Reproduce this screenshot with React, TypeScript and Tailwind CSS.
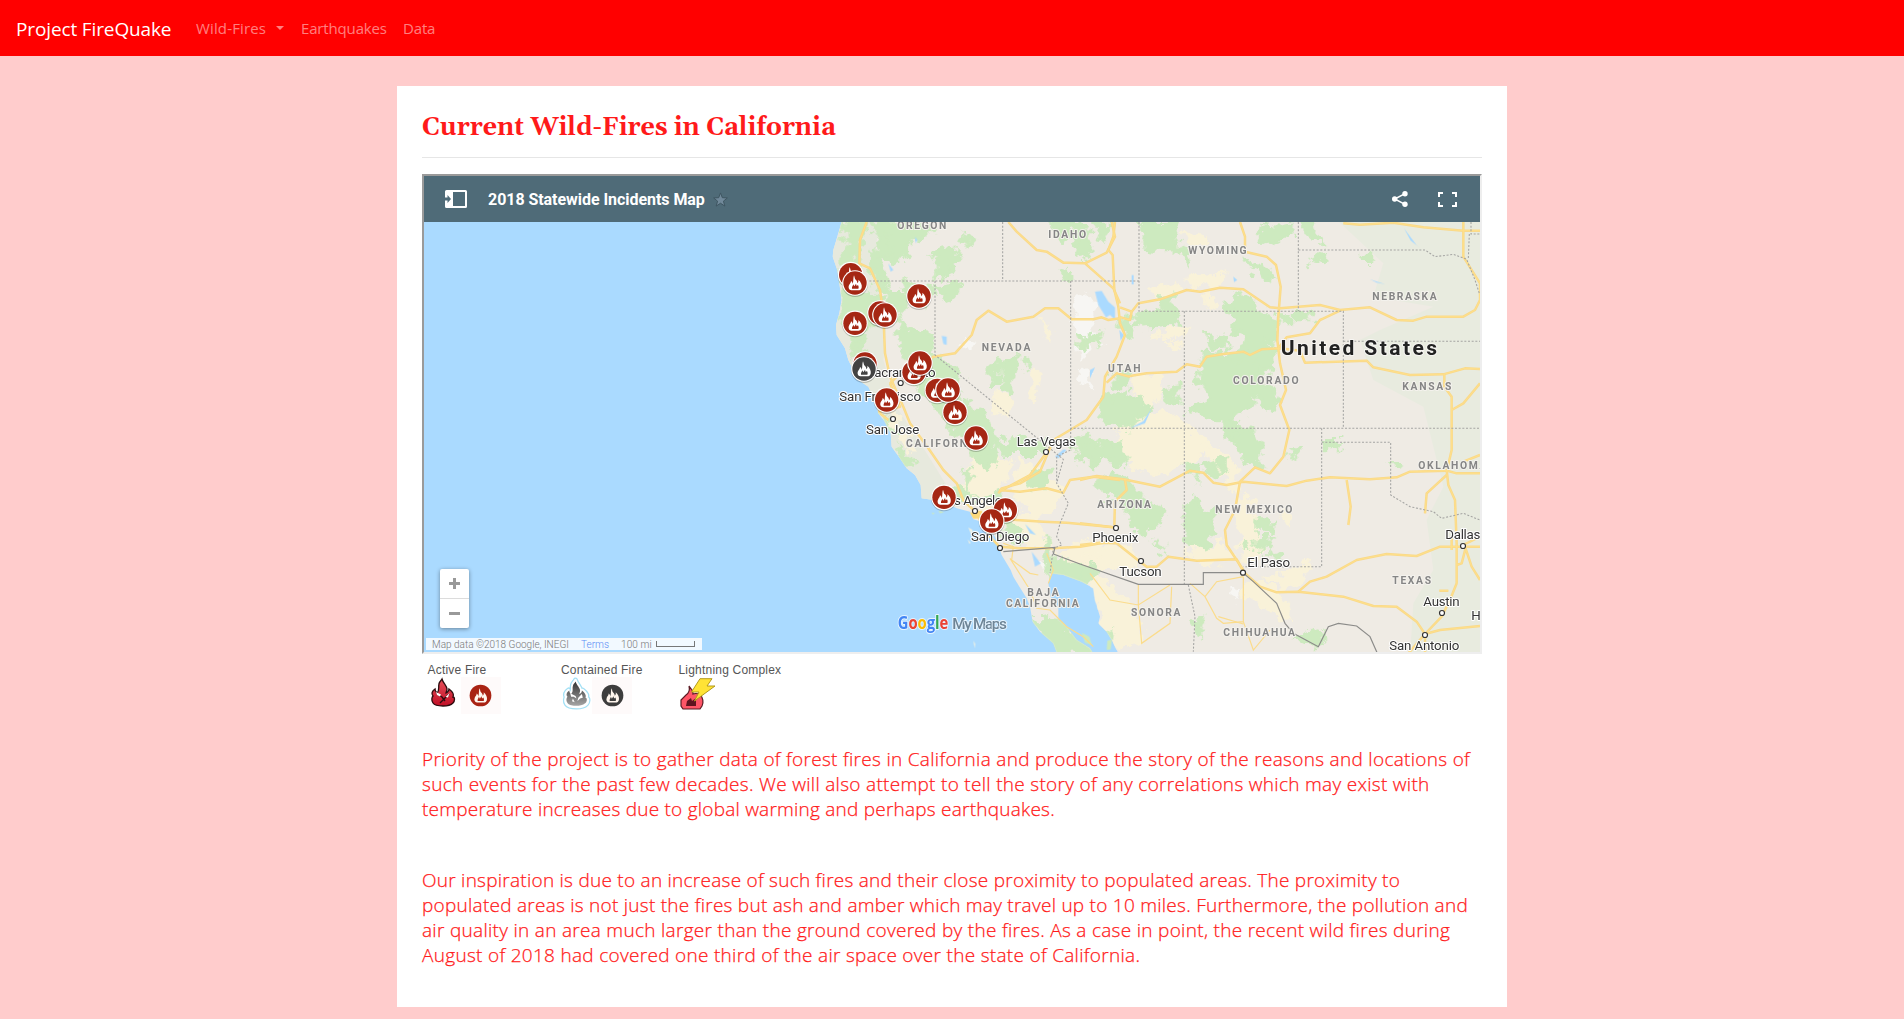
import type { ReactNode } from "react";

/* Map geometry uses a 3x grid: one screen pixel is three map units. */

const LAND =
  "M130 -10L115 40 100 90 98 110 112 150 118 190 125 240 118 280 108 315 110 345 135 385 145 420 160 450 175 480 205 500 225 540 235 580 255 605 272 640 275 680 300 715 320 745 345 765 362 795 365 835 400 840 440 850 470 865 510 875 520 898 545 905 565 922 585 950 598 985 605 1005 632 1050 640 1070 655 1095 680 1135 690 1160 698 1205 720 1235 760 1270 775 1310 885 1310 870 1285 830 1260 800 1220 775 1200 775 1160 752 1130 745 1090 755 1060 790 1065 845 1085 880 1105 885 1140 900 1190 895 1210 920 1235 935 1260 955 1300 2060 1310V-10Z";

const EAST_PLAINS =
  "M1600 -10H2060V1310H1830L1840 1150 1900 1050 1880 900 1930 800 1870 560 1720 480 1680 360 1740 330 1900 260 1720 230 1750 130Z";

const GREENS = [
  "M135 6L200 6 190 60 168 90 175 140 150 150 122 180 120 120 140 60Z",
  "M215 6L290 6 280 60 255 100 240 150 270 215 235 195 215 130 235 60Z",
  "M290 50L330 70 320 100 290 90ZM400 100L470 90 450 140 470 150 405 180 410 130ZM490 40L520 60 500 80ZM408 200L480 190 470 225 430 240Z",
  "M265 215L320 215 310 190 400 205 380 260 320 250 300 300 265 290ZM122 205L200 215 230 260 200 330 160 350 140 310 115 300Z",
  "M270 20L350 10 400 30 390 50 330 60 300 120 260 110ZM200 215L250 230 240 300 215 320 210 260ZM160 345L190 350 200 400 160 400Z",
  "M290 310L345 335 400 345 385 410 320 410ZM370 400L430 415 480 475 490 540 560 595 595 680 560 730 500 665 440 605 380 530 325 465 320 410Z",
  "M570 440L600 425 590 490 575 490ZM610 420L655 410 650 470 620 525 605 490ZM680 410L690 430 680 460Z",
  "M745 5L860 20 870 60 860 110 820 115 830 70 760 30ZM785 150L815 155 815 180 785 180ZM830 350L900 340 895 368 845 378ZM905 545L960 520 960 600 910 590ZM880 10L925 10 910 60Z",
  "M820 660L860 640 900 670 960 660 960 725 850 725ZM170 360L210 400 190 420 160 400Z",
  "M520 690L590 720 560 740 525 715ZM490 750L520 770 500 810ZM680 770L740 755 745 800 700 800ZM440 800L500 810 530 845 470 830ZM610 890L680 950 660 970 610 950ZM745 950L735 1000 745 1080 760 1040Z",
  "M600 670L640 660 740 660 720 700 620 700ZM785 1015L885 1050 845 1090 755 1060 745 1040ZM295 685L340 720 330 740 300 710Z",
  "M250 590L275 610 290 640 270 640ZM60 380L60 380M470 600L520 640 500 660ZM540 830L600 820 590 850Z",
  "M700 1205L770 1198 830 1260 880 1298 780 1300Z",
];
const GREENS_EAST = [
  "M180 10L290 6 275 60 330 100 320 135 290 90 200 85ZM545 20L630 10 630 50 570 75 545 60ZM660 6L700 6 725 60 690 50Z",
  "M165 290L210 275 290 270 290 315 200 320 165 305ZM430 260L480 225 515 230 530 270 590 290 575 365 500 380 470 420 500 350 450 330 480 290Z",
  "M370 400L450 405 540 420 550 480 600 550 560 570 510 510 510 560 450 600 380 590 330 570 390 540 360 480Z",
  "M60 540L120 520 180 540 210 570 150 620 70 610ZM100 470L150 460 140 500 100 500ZM650 275h35v30h-35zM605 285h30v20h-30zM690 120L730 100 735 115 700 130ZM500 120L570 150 570 180 530 160ZM380 350L440 345 440 380 390 385ZM845 112h26v12h-22z",
  "M500 370L580 380 585 420 555 460 530 420 470 420ZM430 600L500 620 530 660 480 680 440 650ZM250 510L300 500 290 550 250 545ZM240 240L280 230 285 262 245 262ZM130 300L160 310 150 350 132 345Z",
  "M0 680L60 670 130 680 130 730 60 720 0 725ZM50 790L100 760 140 780 190 840 250 880 240 910 190 940 160 930 130 860 120 830 60 820Z",
  "M315 860L350 845 370 865 400 880 410 935 370 980 320 975ZM320 730L350 730 350 780ZM460 650L520 630 540 670 540 740 490 730 490 700ZM370 740L430 720 430 760 390 770ZM530 900h45v30h-45zM530 950h40v40h-40zM490 965h18v20h-18zM580 990L600 1020 590 1030Z",
  "M730 665h55v18h-55zM935 728h28v20h-28zM640 1250L720 1230 730 1265 700 1280ZM340 1200L370 1190 360 1240ZM220 975L240 960 250 995ZM0 1040L50 1050 10 1090 0 1090ZM630 690l25 0-20 20z",
  "M0 1235L30 1260 40 1290 15 1280ZM82 1232L96 1240 90 1265 76 1258Z",
];
const SANDS = [
  "M530 710L640 720 590 810 600 860 700 900 760 980 690 980 640 930 560 870 480 810 500 760ZM660 720L780 790 770 860 700 900 640 820Z",
  "M590 520L640 540 620 590 590 570ZM700 450L715 470 700 560 690 500ZM730 310L760 330 750 360ZM260 560L300 600 340 700 290 640ZM770 1000L860 960 960 990 1000 1040 880 1040Z",
];
const SANDS_EAST = [
  "M160 470L240 460 240 520 200 570 170 540ZM180 590L300 580 330 630 460 730 470 810 430 770 380 690 310 730 240 770 190 750 130 720 110 640ZM310 40L380 60 350 75 310 60ZM330 170L430 165 400 200 330 190ZM220 210L300 190 300 215 230 235ZM230 340L320 320 310 345 240 360ZM260 370L300 365 290 385ZM370 235L400 235 390 270Z",
  "M330 985L430 975 470 1020 380 1030 330 1020ZM480 830L520 840 540 1020 500 1030 480 970ZM20 1000L150 980 180 1030 100 1030ZM40 1065L110 1110 170 1170 180 1260 120 1290 90 1230 50 1160 40 1100ZM490 1070L600 1110 640 1190 600 1200 530 1140 490 1130ZM690 1030L650 1100 560 1080ZM600 870L640 890 620 920Z",
];
const SALT = "M820 225L870 220 880 260 870 320 910 370 860 380 820 350ZM500 350L525 360 510 390 490 380ZM830 450L860 440 880 500 850 490ZM700 1010L740 1030 735 1060Z";
const SALT_EAST = "M0 290L40 300 40 340 20 400 0 420ZM450 1100L480 1110 470 1145ZM360 880L380 875 370 895Z";
const WATER = "M885 215L905 213 925 245 945 262 945 300 930 285 918 292 895 255ZM425 348L440 350 440 375 430 372ZM675 912L708 945 690 940ZM695 995L722 1030 705 1040ZM265 130L280 150 272 155ZM345 50L352 60 347 70ZM765 710L790 688 800 690 775 715Z";
const WATER_EAST = "M118 330L132 345 122 362ZM30 450L45 442 30 475ZM155 165h6v28h-6zM460 170L472 180 462 186ZM972 25L1010 75 1022 85 992 62ZM870 178L915 192 890 188ZM150 625L190 603 215 565 195 610Z";

const ROADS = [
  "M200 6L180 60 178 130 210 145 240 210 250 280 255 400 270 470 310 560 330 610 385 685 430 750 470 790 490 840 525 875 570 950 598 980",
  "M625 6L650 35 710 90 740 95 790 128 855 130 920 98 945 50 935 6M855 130L940 205 960 250",
  "M270 490L310 450 380 430 400 410 465 400 515 345 530 300 565 272 620 305 700 290 735 265 775 265 815 298 880 298 905 292 925 300 960 295",
  "M235 575L300 560 270 490M240 580L265 600M598 810L660 815 740 805 790 818 810 780 880 770 960 780M598 815L690 765 738 700",
  "M525 873L600 895 650 900 730 905 800 908 940 922M600 980L660 985 760 985 840 980 960 960",
];
const ROADS_EAST = [
  "M105 6L100 50 85 90 98 105 103 210 115 260 120 310 135 345 110 410 75 470 70 530 20 600 -30 630 -80 660 -120 755 -180 790 -235 805 -245 820",
  "M120 262L155 275 175 250 240 238 320 210 360 215 420 203 490 208 570 262 600 265 720 255 780 270 870 262 950 300 1000 302 1040 290 1150 290 1185 270 1200 240 1200 190 1150 110 1150 6M115 290L150 300 155 275",
  "M480 6L495 50 495 95 560 110 588 135 602 200 595 290 592 360 600 430 618 510 600 555 628 630 610 710 570 760 525 742 480 785",
  "M780 272L720 300 690 340 620 352 595 385M150 468L200 460 290 455 320 433 360 440 380 410 430 402 490 395 510 405 545 388 600 385 660 392 675 428 860 422 880 442 990 465 1090 463 1155 445 1200 447M80 488L110 460 150 470",
  "M1093 463V500L1115 530 1115 690 1100 755M1115 570L1150 550 1200 490M790 10L840 14 940 8 1030 22 1150 32H1200",
  "M0 780L50 768 130 778 240 800 330 752 370 758 400 788 440 795 490 785 620 798 680 782 750 772 870 778 950 772 990 755 1100 752 1130 760 1200 760M1150 725L1200 705",
  "M135 780L140 810 105 845 103 915M0 975L60 968 110 970 180 1025 200 1040 230 1040 265 1010 350 1022 470 1018 490 1055 540 1100 590 1117 655 1115 790 1130 880 1158 950 1160 1010 1205 1035 1242 1080 1230 1200 1218M0 910L100 922",
  "M480 785L465 870 435 930 440 975 490 1050M655 1115L690 1085 740 1070 830 1020 920 1002 1010 1008 1080 980 1200 980",
  "M1100 750L1105 795 1125 840 1130 970 1130 1090 1110 1140 1085 1190 1035 1242 985 1300M1100 765L1040 820 1035 880M800 780L812 860 805 915M1158 980L1145 1030 1130 1035M1155 980L1175 1040 1200 1080M1115 950V990M1035 1242L1035 1300M1078 1112H1105M1150 975L1200 950",
];
const MINOR_EAST = "M-230 970L-200 980 -205 1020 -150 1060 -125 1065M-210 1015L-150 1110 -130 1165 -90 1170 -40 1220 10 1250 40 1280M-100 1000L-80 1050 -95 1090M30 1060L90 1140 175 1155 270 1095M175 1095L175 1155 185 1270 270 1210 275 1100M330 1090L375 1130 410 1195 430 1210 490 1205V1070M375 1130L410 1085 490 1070M490 1205L520 1290 570 1230M415 1190L490 1212";

const BORDERS =
  "M120 183H1017M608 6V183M405 183V405L790 718 770 790M812 183V625H2040M812 625V690L790 700 770 712V790L805 850 780 910 770 950 785 975 760 985 750 1060";
const BORDERS_EAST =
  "M177 6V274H790V625M655 6V274M655 90H1035L1065 110 1120 103 1160 118 1185 180 1198 220M313 274V1093M790 364H1200M1173 6V42H1200M1168 42L1165 115M725 625V1040H490M725 667H932V825L990 860 1060 875 1085 895 1150 880 1200 900M325 1095L345 1190 340 1295";
const NATIONAL = "M610 995L765 982 760 1002 840 1032 1015 1093H1210V1058H1328L1360 1085 1430 1150 1455 1210 1480 1240 1555 1280 1585 1220 1615 1210 1670 1218 1710 1250 1732 1300";

type Label = [text: string, x: number, y: number, width: number];

const STATES: Label[] = [
  ["OREGON", 292, 26, 147],
  ["IDAHO", 745, 55, 113],
  ["NEVADA", 545, 392, 146],
  ["CALIFORNIA", 318, 681, 224],
  ["UTAH", 924, 456, 98],
  ["WYOMING", 1165, 101, 175],
  ["NEBRASKA", 1717, 239, 193],
  ["COLORADO", 1299, 491, 197],
  ["KANSAS", 1807, 509, 147],
  ["ARIZONA", 892, 863, 161],
  ["NEW MEXICO", 1246, 880, 231],
  ["OKLAHOMA", 1855, 746, 204],
  ["TEXAS", 1777, 1091, 116],
  ["SONORA", 993, 1187, 148],
  ["CHIHUAHUA", 1270, 1249, 215],
  ["BAJA", 682, 1127, 94],
  ["CALIFORNIA", 618, 1160, 218],
];

const CITIES: Label[] = [
  ["Sacramento", 200, 472, 207],
  ["San Francisco", 118, 542, 245],
  ["San Jose", 198, 642, 160],
  ["Las Vegas", 650, 678, 178],
  ["Los Angeles", 420, 856, 205],
  ["San Diego", 513, 963, 175],
  ["Phoenix", 877, 967, 138],
  ["Tucson", 958, 1067, 127],
  ["El Paso", 1342, 1042, 128],
  ["Dallas", 1936, 957, 105],
  ["Austin", 1870, 1159, 109],
  ["San Antonio", 1768, 1291, 210],
  ["Houston", 2014, 1200, 140],
];

const DOTS = [
  [302, 489], [279, 597], [738, 696], [525, 873], [600, 984], [948, 924],
  [1023, 1023], [1329, 1058], [1989, 978], [1926, 1179], [1875, 1245],
];

const FIRES: [number, number, boolean?][] = [
  [152, 164], [165, 189], [357, 228], [240, 279], [255, 285], [165, 310],
  [195, 432], [192, 447, true], [342, 457], [360, 429], [465, 577],
  [412, 511], [444, 510], [260, 540], [528, 654], [616, 870], [432, 832], [575, 903],
];

const FLAME =
  "M-3 -23C0 -17 -2 -13 3 -9C6 -6 7 -3 7 1C10 -2 11 -6 10 -10C18 -3 22 6 20 14C19 19 15 22 10 22H-11C-18 21 -21 14 -18 7C-16 2 -12 0 -12 -6C-9 -4 -7 -1 -7 3C-4 -5 -6 -15 -3 -23Z";
const EMBER = "M-9 17C-10 11 -6 9 -5 4L-2 10 3 2 5 9 9 6C12 11 11 15 10 17Z";

function Halo({ items, className, size, stroke }: { items: Label[]; className: string; size: number; stroke: string }) {
  return (
    <g className={className} fontSize={size} stroke={stroke} strokeWidth={6} strokeLinejoin="round" paintOrder="stroke">
      {items.map(([t, x, y, w]) => (
        <text key={t + x} x={x} y={y} textLength={w}>
          {t}
        </text>
      ))}
    </g>
  );
}

function Shapes({ list }: { list: string[] }) {
  return (
    <>
      {list.map((d) => (
        <path key={d} d={d} />
      ))}
    </>
  );
}

function MapCanvas() {
  return (
    <svg className="block h-[430px] w-[1056px]" viewBox="-1128 6 3168 1290" fill="none">
      <defs>
        <filter id="rough" x="-5%" y="-5%" width="110%" height="110%">
          <feTurbulence type="fractalNoise" baseFrequency="0.03" numOctaves="4" seed="4" />
          <feDisplacementMap in="SourceGraphic" scale="60" xChannelSelector="R" yChannelSelector="G" />
        </filter>
        <clipPath id="land">
          <path d={LAND} />
        </clipPath>
      </defs>
      <path d="M-1128 0H2060V1310H-1128Z" fill="#aadaff" />
      <path d={LAND} fill="#efebe4" />
      <g clipPath="url(#land)">
        <path d="M90 0H240L220 130 260 300 250 420 290 560 380 700 480 860 300 860 60 400Z" fill="#e7e9dd" />
        <path d={EAST_PLAINS} fill="#e8ebdf" />
        <g filter="url(#rough)">
          <g fill="#f9f2d9" stroke="#f9f2d9" strokeWidth={8}>
            <Shapes list={SANDS} />
            <g transform="translate(840 0)">
              <Shapes list={SANDS_EAST} />
            </g>
          </g>
          <g fill="#f7f6f3">
            <path d={SALT} />
            <path d={SALT_EAST} transform="translate(840 0)" />
          </g>
          <g fill="#cdeabf" stroke="#cdeabf" strokeWidth={10}>
            <Shapes list={GREENS} />
            <g transform="translate(840 0)">
              <Shapes list={GREENS_EAST} />
            </g>
          </g>
        </g>
        <g fill="#aadaff">
          <path d={WATER} />
          <path d={WATER_EAST} transform="translate(840 0)" />
        </g>
      </g>
      <g fill="#cdeabf">
        <path d="M845 1238L868 1250 875 1275 855 1268ZM922 1262L936 1258 932 1288 920 1290ZM395 877L405 880 398 883ZM415 872L432 876 420 880Z" />
        <path d="M520 1262L526 1272 524 1285ZM505 922L518 930 514 945ZM503 958L512 968 508 972Z" fill="#eef0e4" />
      </g>
      <path d={MINOR_EAST} transform="translate(840 0)" stroke="#fbdc8c" strokeWidth={3.5} />
      <g stroke="#f9d98a" strokeWidth={7.5} strokeLinejoin="round">
        <Shapes list={ROADS} />
        <g transform="translate(840 0)">
          <Shapes list={ROADS_EAST} />
        </g>
      </g>
      <g stroke="#ffe08a" strokeWidth={3} strokeLinejoin="round">
        <Shapes list={ROADS} />
        <g transform="translate(840 0)">
          <Shapes list={ROADS_EAST} />
        </g>
      </g>
      <path d="M510 878L545 872 545 895 520 896Z" fill="#fbd97c" />
      <g stroke="#a5a5a3" strokeWidth={3.2} strokeDasharray="6 5">
        <path d={BORDERS} />
        <path d={BORDERS_EAST} transform="translate(840 0)" />
      </g>
      <path d={NATIONAL} stroke="#8c8c8a" strokeWidth={3.5} />

      <Halo items={STATES} className="fill-[#858585] font-['Roboto',sans-serif] font-bold" size={31} stroke="#f4f2ed" />
      <Halo
        items={[["United States", 1442, 405, 469]]}
        className="fill-[#222222] font-['Roboto',sans-serif] font-bold"
        size={63}
        stroke="#f7f5f2"
      />
      <Halo items={CITIES} className="fill-[#333333] font-['Roboto',sans-serif]" size={40} stroke="#ffffff" />
      {DOTS.map(([x, y]) => (
        <circle key={x} cx={x} cy={y} r={7.5} fill="#fff" stroke="#333" strokeWidth={3.5} />
      ))}

      {FIRES.map(([x, y, contained]) => (
        <g key={`${x}-${y}`} transform={`translate(${x} ${y})`}>
          <circle cy={3} r={39} fill="#000" opacity={0.22} />
          <circle r={38.5} fill="#fff" />
          <circle r={35} fill={contained ? "#424242" : "#a52714"} />
          <path d={FLAME} fill="#fff" />
          <path d={EMBER} fill={contained ? "#424242" : "#a52714"} />
        </g>
      ))}

      <g
        className="font-['Open_Sans',sans-serif] font-bold"
        fontSize={52}
        stroke="#e6f4ff"
        strokeWidth={6}
        strokeLinejoin="round"
        paintOrder="stroke"
      >
        <text x={293} y={1226} textLength={152} lengthAdjust="spacingAndGlyphs">
          <tspan fill="#4285f4">G</tspan>
          <tspan fill="#ea4335">o</tspan>
          <tspan fill="#fbbc05">o</tspan>
          <tspan fill="#4285f4">g</tspan>
          <tspan fill="#34a853">l</tspan>
          <tspan fill="#ea4335">e</tspan>
        </text>
        <text className="font-['Roboto',sans-serif] font-medium" x={457} y={1226} fontSize={46} textLength={164} fill="#6d8496">
          My Maps
        </text>
      </g>
    </svg>
  );
}

function MapHeader() {
  return (
    <div className="flex h-[46px] items-center bg-[#4f6b78] pr-[23px] pl-[21px]">
      <svg className="h-[18px] w-[22px]" viewBox="0 0 22 18">
        <path
          fillRule="evenodd"
          fill="#fff"
          d="M1.5 0h19A1.5 1.5 0 0 1 22 1.5v15a1.5 1.5 0 0 1-1.5 1.5h-19A1.5 1.5 0 0 1 0 16.500v-6h2.500v2.500L6 9 2.500 5v2.500H0v-6A1.500 1.500 0 0 1 1.500 0ZM8 2v14h12V2Z"
        />
      </svg>
      <span className="ml-[21px] pt-[2px] font-['Roboto',sans-serif] text-[16px] leading-[20px] font-bold tracking-[-0.050px] text-white">
        2018 Statewide Incidents Map
      </span>
      <svg className="ml-[8px] size-[15px]" viewBox="0 0 24 24">
        <path
          d="M12 1.500l2.900 7.600 8.100.400-6.300 5.100 2.200 7.900-6.900-4.500-6.900 4.500 2.200-7.900L1 9.500l8.100-.400z"
          fill="#71899a"
          stroke="#3f5661"
          strokeWidth={1.6}
        />
      </svg>
      <svg className="ml-auto h-[16px] w-[16px]" viewBox="0 0 16 16">
        <path d="M13 2.700L2.700 8 13 13.300" stroke="#fff" strokeWidth={1.5} fill="none" />
        <circle cx={13} cy={2.7} r={2.7} fill="#fff" />
        <circle cx={2.7} cy={8} r={2.7} fill="#fff" />
        <circle cx={13} cy={13.3} r={2.7} fill="#fff" />
      </svg>
      <svg className="ml-[30px] h-[15px] w-[19px]" viewBox="0 0 19 15" fill="none" stroke="#fff" strokeWidth={2}>
        <path d="M1 5V1H5M14 1H18V5M18 10V14H14M5 14H1V10" />
      </svg>
    </div>
  );
}

function IncidentMap() {
  return (
    <div className="relative h-[480px] overflow-hidden border-2 border-t-[#9a9a9a] border-r-[#eeeeee] border-b-[#eeeeee] border-l-[#9a9a9a]">
      <MapHeader />
      <MapCanvas />
      <div className="absolute top-[393px] left-[16px] flex h-[59px] w-[29px] flex-col rounded-[2px] bg-white shadow-[0_1px_4px_rgba(0,0,0,0.4)]">
        <button className="flex flex-1 items-center justify-center border-b border-[#dcdcdc]">
          <svg className="size-[11px]" viewBox="0 0 11 11">
            <path d="M4 0h3v4h4v3H7v4H4V7H0V4h4z" fill="#999" />
          </svg>
        </button>
        <button className="flex flex-1 items-center justify-center">
          <svg className="h-[3px] w-[11px]" viewBox="0 0 11 3">
            <path d="M0 0h11v3H0z" fill="#999" />
          </svg>
        </button>
      </div>
      <div className="absolute top-[462px] left-[2px] flex h-[12px] w-[276px] items-center bg-white/85 pt-px pl-[6px] font-['Roboto',sans-serif] text-[10px] leading-[12px] font-light text-[#777777]">
        <span className="w-[149px] whitespace-nowrap">Map data ©2018 Google, INEGI</span>
        <span className="w-[40px] text-[#5b8df5]">Terms</span>
        <span className="w-[35px] tracking-[0.100px] whitespace-nowrap">100 mi</span>
        <span className="mb-px h-[6px] w-[39px] border border-t-0 border-[#777777]" />
      </div>
    </div>
  );
}

function FireBadge({ className, fill }: { className: string; fill: string }) {
  return (
    <div className={className}>
      <svg className="size-[23px]" viewBox="-36 -36 72 72">
        <circle r={34} fill={fill} />
        <path d={FLAME} fill="#fff6ee" />
        <path d={EMBER} fill={fill} />
      </svg>
    </div>
  );
}

const BLAZE =
  "M11 0C12 4 16 7 16 10C16 12 15 13 15 14C17 13 18 12 18 10C22 13 23 16 22 18C24 18 24 22 22 24C19 27 15 27 12 27C8 27 4 27 2 24C0 21 1 18 2 17C0 15 1 12 4 10C4 12 5 13 6 14C9 11 7 8 8 5C8 3 10 2 11 0Z";
const BLAZE_GAPS = "M5 13L11 16 12 19 9 17 6 17ZM18 14L14 18 13 22 16 19 19 18ZM8 19L10 23 7 22Z";

function LegendItem({ label, className, children }: { label: string; className: string; children: ReactNode }) {
  return (
    <div className={className}>
      <div className="h-[14px] font-['Liberation_Sans',Arial,sans-serif] text-[12px] leading-[14px] tracking-[0.200px] whitespace-nowrap text-[#555555]">
        {label}
      </div>
      <div className="flex h-[37px]">{children}</div>
    </div>
  );
}

function Legend() {
  return (
    <div className="flex h-[93px] pt-[9px] pl-[5.500px]">
      <LegendItem label="Active Fire" className="w-[133.500px]">
        <svg className="mt-[2px] ml-[3px] h-[27px] w-[24px] overflow-visible" viewBox="0 0 24 27">
          <defs>
            <linearGradient id="red-blaze" x1="0" y1="0" x2="0" y2="1">
              <stop offset="0" stopColor="#e8505a" />
              <stop offset="1" stopColor="#c00f26" />
            </linearGradient>
          </defs>
          <path d={BLAZE} fill="url(#red-blaze)" stroke="#2b0b0e" strokeWidth={1.3} />
          <path d="M6 15L11 18 14 22M18 15L12 21 9 24" stroke="#2b0b0e" strokeWidth={1.4} fill="none" />
          <path d="M5 13L10 15.500 9 17.500 6 16ZM18.500 14L14.500 18 17 18.500Z" fill="#fff" />
        </svg>
        <FireBadge className="ml-[6px] flex h-[37px] w-[40px] items-center justify-center bg-[#fefafa]" fill="#a92313" />
      </LegendItem>
      <LegendItem label="Contained Fire" className="w-[117.500px]">
        <svg className="mt-[1px] ml-[2px] h-[31px] w-[27px] overflow-visible" viewBox="-1.500 -2 27 31">
          <defs>
            <linearGradient id="gray-blaze" x1="0" y1="0" x2="0" y2="1">
              <stop offset="0" stopColor="#333333" />
              <stop offset="1" stopColor="#a5a5a5" />
            </linearGradient>
          </defs>
          <path d={BLAZE} fill="#fff" stroke="#a3e0f5" strokeWidth={5} strokeLinejoin="round" />
          <path d={BLAZE} fill="#fff" stroke="#fff" strokeWidth={2.5} strokeLinejoin="round" />
          <path d={BLAZE} fill="url(#gray-blaze)" transform="translate(1.200 1.500) scale(0.900)" />
          <path d={BLAZE_GAPS} fill="#fff" transform="translate(1.200 1.500) scale(0.900)" />
        </svg>
        <FireBadge className="ml-[2px] flex h-[37px] w-[40px] items-center justify-center bg-[#fefafa]" fill="#3d3d3d" />
      </LegendItem>
      <LegendItem label="Lightning Complex" className="w-[120px]">
        <svg className="mt-[1px] ml-[1px] h-[32px] w-[36px]" viewBox="0 0 36 32">
          <path
            d="M9 8L12 12C13 14 13 15 13 16C15 15 20 16 20 16C23 20 24 24 22 28L20 31H3L1 28V22L6 17C9 15 10 12 9 8Z"
            fill="#ff5567"
            stroke="#5a1a22"
            strokeWidth={1.2}
          />
          <path d="M6 28L7 23 11 20 12 23 16 20 16 28Z" fill="#5f1420" />
          <path d="M20 0.700H32L27 8H35L14.500 23 19 14H11.500Z" fill="#ffe335" stroke="#b39a1c" strokeWidth={1} />
        </svg>
      </LegendItem>
    </div>
  );
}

function Navbar() {
  return (
    <nav className="flex h-[56px] items-center bg-[#ff0000] pl-[16px] font-['Open_Sans',sans-serif] text-[15px] leading-[24px] whitespace-nowrap text-white/50">
      <a className="w-[180px] pt-px text-[19px] leading-[30px] tracking-[-0.130px] text-white">Project FireQuake</a>
      <a className="flex w-[105px] items-center tracking-[0.150px]">
        Wild-Fires
        <span className="ml-[9.500px] border-x-[4.800px] border-t-[4.800px] border-x-transparent border-t-white/50" />
      </a>
      <a className="w-[102px] tracking-[-0.150px]">Earthquakes</a>
      <a className="tracking-[-0.150px]">Data</a>
    </nav>
  );
}

export default function App() {
  return (
    <div className="h-[1019px] overflow-hidden bg-[#ffcccc]">
      <Navbar />
      <main className="mx-auto mt-[30px] h-[921px] w-[1110px] bg-white px-[25px] text-[#ff1a1a]">
        <h1 className="h-[71px] pt-[26px] font-['Gelasio','Liberation_Serif',serif] text-[25px] leading-[32px] font-bold tracking-[-0.030px] whitespace-nowrap">
          Current Wild-Fires in California
        </h1>
        <hr className="mb-[16px] border-[#e6e6e6]" />
        <IncidentMap />
        <Legend />
        <div className="font-['Open_Sans',sans-serif] text-[19px] leading-[25px] font-light whitespace-nowrap [-webkit-text-stroke:0.250px_#ff1a1a]">
          <p className="tracking-[0.300px]">
            Priority of the project is to gather data of forest fires in California and produce the story of the reasons and locations of
            <br />
            such events for the past few decades. We will also attempt to tell the story of any correlations which may exist with
            <br />
            <span className="tracking-[0.230px]">temperature increases due to global warming and perhaps earthquakes.</span>
          </p>
          <p className="mt-[46px] tracking-[0.258px]">
            Our inspiration is due to an increase of such fires and their close proximity to populated areas. The proximity to
            <br />
            populated areas is not just the fires but ash and amber which may travel up to 10 miles. Furthermore, the pollution and
            <br />
            <span className="tracking-[0.300px]">
              air quality in an area much larger than the ground covered by the fires. As a case in point, the recent wild fires during
              <br />
              August of 2018 had covered one third of the air space over the state of California.
            </span>
          </p>
        </div>
      </main>
    </div>
  );
}
